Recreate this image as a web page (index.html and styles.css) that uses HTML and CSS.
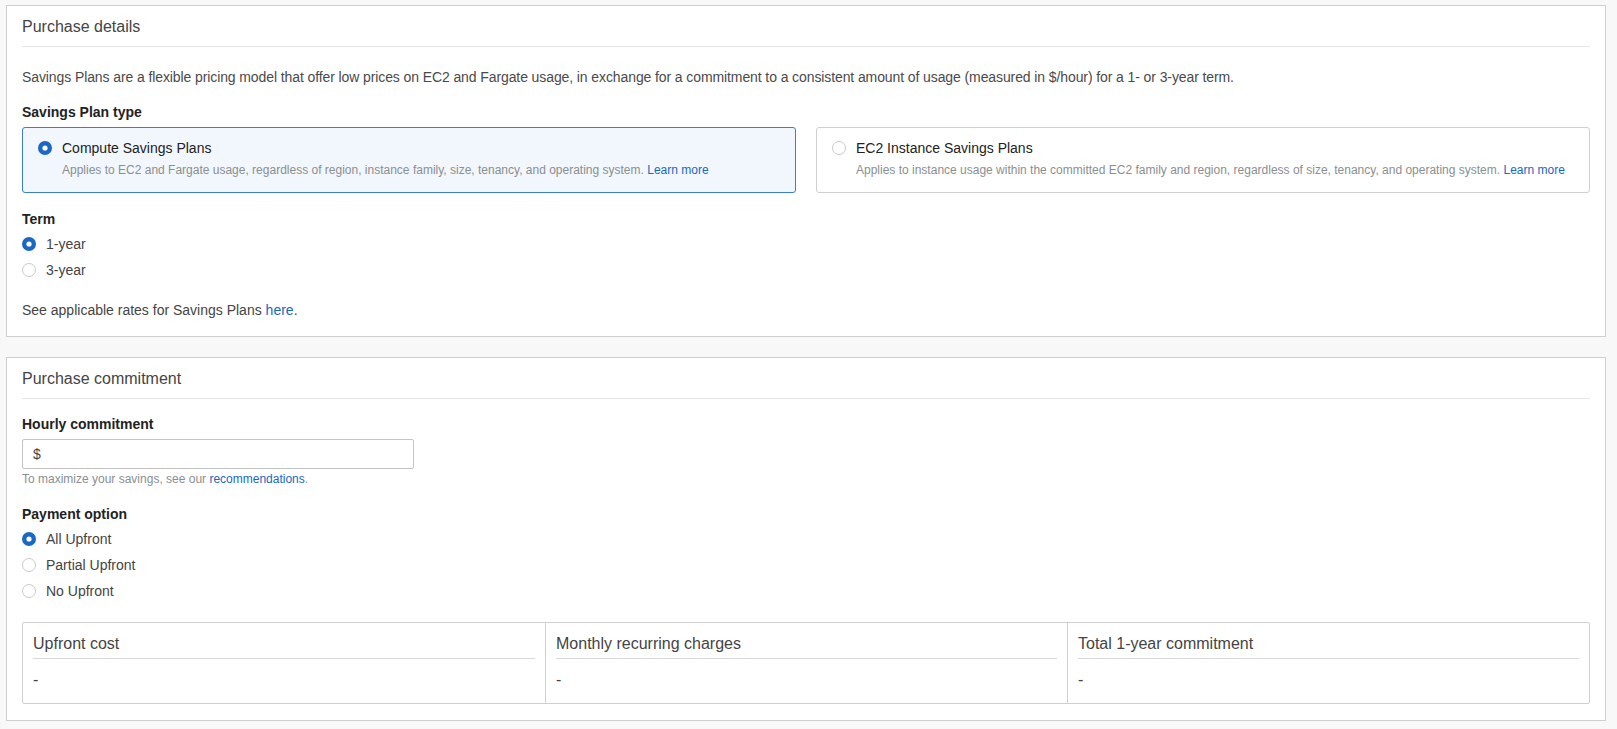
FILE: index.html
```html
<!DOCTYPE html>
<html lang="en">
<head>
<meta charset="utf-8">
<title>Purchase Savings Plans</title>
<link rel="stylesheet" href="styles.css">
</head>
<body>
<div class="page">
  <section class="panel">
    <h2 class="panel-title">Purchase details</h2>
    <p class="desc">Savings Plans are a flexible pricing model that offer low prices on EC2 and Fargate usage, in exchange for a commitment to a consistent amount of usage (measured in $/hour) for a 1- or 3-year term.</p>
    <div class="field-label label-type">Savings Plan type</div>
    <div class="tiles">
      <div class="tile selected">
        <svg class="radio" viewBox="0 0 14 14" width="14" height="14"><circle cx="7" cy="7" r="7" fill="#1a67c4"/><circle cx="7" cy="7" r="2.6" fill="#fff"/></svg>
        <div class="tile-text">
          <div class="tile-title">Compute Savings Plans</div>
          <div class="tile-desc">Applies to EC2 and Fargate usage, regardless of region, instance family, size, tenancy, and operating system. <a class="link" href="#">Learn more</a></div>
        </div>
      </div>
      <div class="tile">
        <svg class="radio" viewBox="0 0 14 14" width="14" height="14"><circle cx="7" cy="7" r="6.5" fill="#fff" stroke="#c9c9c9"/></svg>
        <div class="tile-text">
          <div class="tile-title">EC2 Instance Savings Plans</div>
          <div class="tile-desc">Applies to instance usage within the committed EC2 family and region, regardless of size, tenancy, and operating system. <a class="link" href="#">Learn more</a></div>
        </div>
      </div>
    </div>
    <div class="field-label label-term">Term</div>
    <div class="radio-group">
      <label class="radio-row"><svg class="radio" viewBox="0 0 14 14" width="14" height="14"><circle cx="7" cy="7" r="7" fill="#1a67c4"/><circle cx="7" cy="7" r="2.6" fill="#fff"/></svg><span>1-year</span></label>
      <label class="radio-row"><svg class="radio" viewBox="0 0 14 14" width="14" height="14"><circle cx="7" cy="7" r="6.5" fill="#fff" stroke="#c9c9c9"/></svg><span>3-year</span></label>
    </div>
    <p class="note">See applicable rates for Savings Plans <a class="link" href="#">here</a>.</p>
  </section>

  <section class="panel panel-second">
    <h2 class="panel-title">Purchase commitment</h2>
    <div class="field-label label-hourly">Hourly commitment</div>
    <div class="input">$</div>
    <div class="help">To maximize your savings, see our <a class="link" href="#">recommendations</a>.</div>
    <div class="field-label label-payment">Payment option</div>
    <div class="radio-group">
      <label class="radio-row"><svg class="radio" viewBox="0 0 14 14" width="14" height="14"><circle cx="7" cy="7" r="7" fill="#1a67c4"/><circle cx="7" cy="7" r="2.6" fill="#fff"/></svg><span>All Upfront</span></label>
      <label class="radio-row"><svg class="radio" viewBox="0 0 14 14" width="14" height="14"><circle cx="7" cy="7" r="6.5" fill="#fff" stroke="#c9c9c9"/></svg><span>Partial Upfront</span></label>
      <label class="radio-row"><svg class="radio" viewBox="0 0 14 14" width="14" height="14"><circle cx="7" cy="7" r="6.5" fill="#fff" stroke="#c9c9c9"/></svg><span>No Upfront</span></label>
    </div>
    <div class="summary">
      <div class="summary-col">
        <div class="summary-head">Upfront cost</div>
        <div class="summary-value">-</div>
      </div>
      <div class="summary-col">
        <div class="summary-head">Monthly recurring charges</div>
        <div class="summary-value">-</div>
      </div>
      <div class="summary-col">
        <div class="summary-head">Total 1-year commitment</div>
        <div class="summary-value">-</div>
      </div>
    </div>
  </section>
</div>
</body>
</html>
```

FILE: styles.css
```css
* { box-sizing: border-box; }

html, body {
  margin: 0;
  padding: 0;
  background: #f8f8f8;
  font-family: "Liberation Sans", Arial, Helvetica, sans-serif;
  color: #444;
}

.page {
  padding: 5px 11px 0 6px;
}

.panel {
  background: #fff;
  border: 1px solid #cfcfcf;
  padding: 0 15px 16px;
}

.panel-second {
  margin-top: 20px;
}

.panel-title {
  margin: 0;
  padding: 10px 0 8px;
  font-size: 16px;
  line-height: 22px;
  font-weight: normal;
  color: #444;
  border-bottom: 1px solid #e6e6e6;
}

.desc {
  margin: 20px 0 0;
  font-size: 14px;
  line-height: 20px;
  letter-spacing: -0.1px;
  color: #4a4a4a;
}

.field-label {
  font-size: 14px;
  line-height: 20px;
  font-weight: bold;
  color: #222;
}

.label-type { margin-top: 15px; }
.label-term { margin-top: 16px; }
.label-hourly { margin-top: 15px; }
.label-payment { margin-top: 17px; }

.tiles {
  margin-top: 5px;
  display: grid;
  grid-template-columns: 1fr 1fr;
  gap: 20px;
}

.tile {
  display: flex;
  align-items: flex-start;
  gap: 10px;
  border: 1px solid #d0d0d0;
  border-radius: 3px;
  padding: 10px 15px 14px;
  background: #fff;
}

.tile.selected {
  background: #f1f7fd;
  border-color: #3a7fcf;
}

.tile .radio {
  margin-top: 3px;
  flex: none;
}

.tile-title {
  font-size: 14px;
  line-height: 20px;
  color: #222;
}

.tile-desc {
  margin-top: 4px;
  font-size: 12px;
  line-height: 16px;
  color: #8a8f91;
}

.link {
  color: #1a67c4;
  text-decoration: none;
}

.radio-group {
  margin-top: 5px;
  display: flex;
  flex-direction: column;
  gap: 6px;
}

.radio-row {
  display: flex;
  align-items: center;
  gap: 10px;
  font-size: 14px;
  line-height: 20px;
  color: #444;
}

.radio {
  display: block;
  flex: none;
}

.note {
  margin: 20px 0 0;
  font-size: 14px;
  line-height: 20px;
  color: #444;
}

.input {
  margin-top: 5px;
  width: 392px;
  height: 30px;
  border: 1px solid #c4c4c4;
  border-radius: 2px;
  padding: 0 10px;
  font-size: 14px;
  line-height: 28px;
  color: #444;
}

.help {
  margin-top: 2px;
  font-size: 12px;
  line-height: 16px;
  color: #8a8f91;
}

.summary {
  margin-top: 21px;
  display: grid;
  grid-template-columns: 1fr 1fr 1fr;
  border: 1px solid #cfcfcf;
  border-radius: 2px;
}

.summary-col {
  padding: 10px 10px 12px;
}

.summary-col + .summary-col {
  border-left: 1px solid #cfcfcf;
}

.summary-head {
  font-size: 16px;
  line-height: 22px;
  padding-bottom: 3px;
  border-bottom: 1px solid #d8d8d8;
  color: #444;
}

.summary-value {
  margin-top: 10px;
  font-size: 16px;
  line-height: 22px;
  color: #444;
}
```
